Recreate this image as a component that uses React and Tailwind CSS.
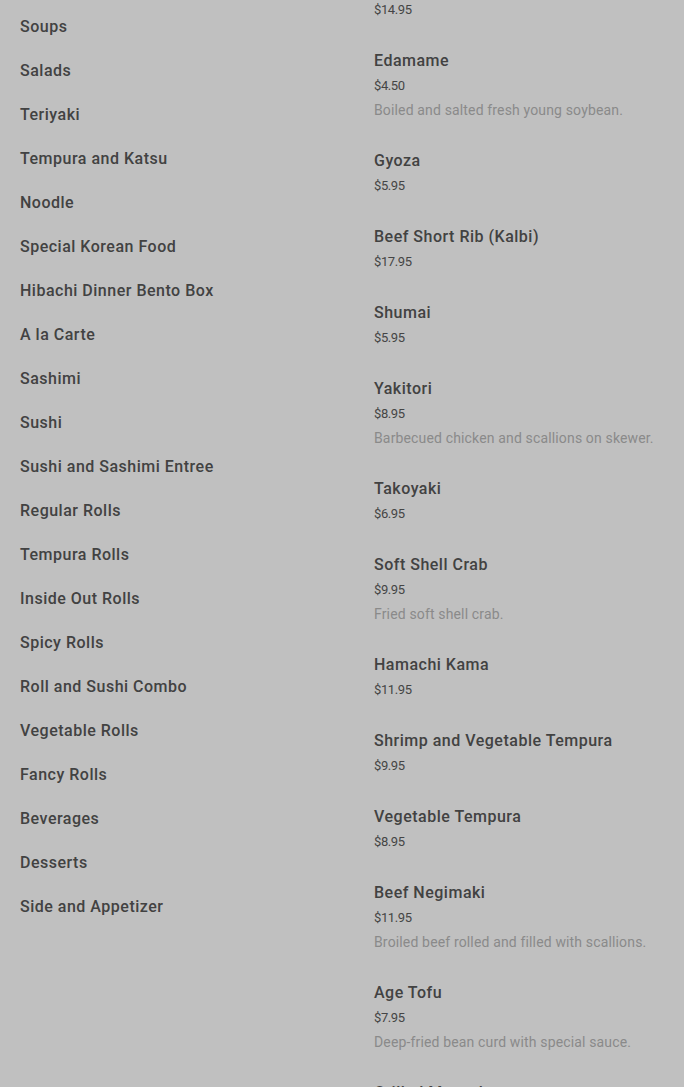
import React from "react";

const categories = [
  "Soups","Salads","Teriyaki","Tempura and Katsu","Noodle","Special Korean Food","Hibachi Dinner Bento Box","A la Carte","Sashimi","Sushi","Sushi and Sashimi Entree","Regular Rolls","Tempura Rolls","Inside Out Rolls","Spicy Rolls","Roll and Sushi Combo","Vegetable Rolls","Fancy Rolls","Beverages","Desserts","Side and Appetizer",
];

const items = [
  { name: "Miso Soup", price: "$14.95" },
  { name: "Edamame", price: "$4.50", desc: "Boiled and salted fresh young soybean." },
  { name: "Gyoza", price: "$5.95" },
  { name: "Beef Short Rib (Kalbi)", price: "$17.95" },
  { name: "Shumai", price: "$5.95" },
  { name: "Yakitori", price: "$8.95", desc: "Barbecued chicken and scallions on skewer." },
  { name: "Takoyaki", price: "$6.95" },
  { name: "Soft Shell Crab", price: "$9.95", desc: "Fried soft shell crab." },
  { name: "Hamachi Kama", price: "$11.95" },
  { name: "Shrimp and Vegetable Tempura", price: "$9.95" },
  { name: "Vegetable Tempura", price: "$8.95" },
  { name: "Beef Negimaki", price: "$11.95", desc: "Broiled beef rolled and filled with scallions." },
  { name: "Age Tofu", price: "$7.95", desc: "Deep-fried bean curd with special sauce." },
  { name: "Grilled Mussels", price: "$8.95" },
];

export default function App() {
  return (
    <div className="w-[684px] h-[1087px] overflow-hidden bg-[#c0c0c0] flex" style={{ fontFamily: "Roboto, 'Liberation Sans', sans-serif" }}>
      <div className="w-[374px] pl-5 pt-[5px] flex flex-col">
        {categories.map((c) => (
          <div key={c} className="py-[10px] leading-6 text-[16px] font-medium tracking-[0.5px] text-[#424242]">{c}</div>
        ))}
      </div>
      <div className="flex-1 flex flex-col mt-[-28px]">
        {items.map((it) => (
          <div key={it.name} className="mb-[26px]">
            <div className="leading-[26px] text-[16px] font-medium tracking-[0.5px] text-[#424242]">{it.name}</div>
            <div className="leading-6 text-[13px] tracking-[-0.4px] text-[#454545]">{it.price}</div>
            {it.desc && <div className="leading-6 text-[14px] tracking-[0.15px] text-[#8a8a8a]">{it.desc}</div>}
          </div>
        ))}
      </div>
    </div>
  );
}
